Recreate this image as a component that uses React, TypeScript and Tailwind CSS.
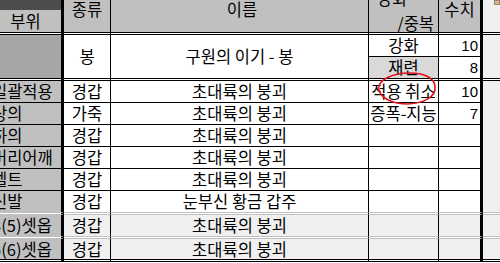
const C1 = 'w-[64px] shrink-0 border-r-[3px] border-r-black overflow-hidden';
const C2 = 'w-[47px] shrink-0 border-r border-r-black';
const C3 = 'w-[258px] shrink-0 border-r border-r-black';
const C4 = 'w-[70px] shrink-0 border-r border-r-black';
const C5 = 'w-[44px] shrink-0 border-r-[3px] border-r-black';
const C6 = 'w-[17px] shrink-0';

type Item = { part: string; kind: string; name: string; opt?: string; val?: string };

const rows: Item[] = [
  { part: '일괄적용', kind: '경갑', name: '초대륙의 붕괴', opt: '적용 취소', val: '10' },
  { part: '상의', kind: '가죽', name: '초대륙의 붕괴', opt: '증폭-지능', val: '7' },
  { part: '하의', kind: '경갑', name: '초대륙의 붕괴' },
  { part: '머리어깨', kind: '경갑', name: '초대륙의 붕괴' },
  { part: '벨트', kind: '경갑', name: '초대륙의 붕괴' },
  { part: '신발', kind: '경갑', name: '눈부신 황금 갑주' },
];

const setRows: Item[] = [
  { part: '3(5)셋옵', kind: '경갑', name: '초대륙의 붕괴' },
  { part: '5(6)셋옵', kind: '경갑', name: '초대륙의 붕괴' },
];

// excel style double rule (line / white / line)
function Sep({ gray }: { gray?: boolean }) {
  const y = gray ? 'border-y border-y-[#c0c0c0] bg-white' : 'border-y border-y-black bg-white';
  return (
    <div className="flex h-[3px]">
      <div className={`${C1} ${y}`} />
      <div className={`${C2} ${y}`} />
      <div className={`${C3} ${y}`} />
      <div className={`${C4} ${y}`} />
      <div className={`${C5} ${y}`} />
      <div className={`${C6} ${y}`} />
    </div>
  );
}

function Row({ item, h, line, shade }: { item: Item; h: string; line?: boolean; shade?: boolean }) {
  const b = line ? 'border-b border-b-black' : '';
  const bg = shade ? 'bg-[#f0f0f0]' : 'bg-white';
  return (
    <div className={`flex ${h}`}>
      <div className={`${C1} ${b} bg-[#c0c0c0] flex items-center`}>
        <span className="ml-[-8px] whitespace-nowrap">{item.part}</span>
      </div>
      <div className={`${C2} ${b} ${bg} flex items-center justify-center`}>{item.kind}</div>
      <div className={`${C3} ${b} ${bg} flex items-center justify-center whitespace-nowrap`}>{item.name}</div>
      <div className={`${C4} ${b} ${bg} flex items-center justify-center whitespace-nowrap`}>{item.opt}</div>
      <div className={`${C5} ${b} ${bg} flex items-center justify-end pr-[2px] text-[15px] font-['Liberation_Sans',sans-serif]`}>
        {item.val}
      </div>
      <div className={`${C6} bg-[#f0f0f0]`} />
    </div>
  );
}

export default function App() {
  return (
    <div className="relative w-[500px] h-[263px] overflow-hidden bg-white text-black text-[16.5px] leading-none font-['Noto_Sans_CJK_KR',sans-serif]">
      {/* header */}
      <div className="flex h-[32px] bg-[#c0c0c0]">
        <div className={`${C1} flex flex-col`}>
          <div className="h-[10px] bg-[#4d4d4d]" />
          <div className="flex-1 flex items-center justify-center -ml-[10px] w-[71px]">부위</div>
        </div>
        <div className={`${C2} flex justify-center pt-[1px]`}>종류</div>
        <div className={`${C3} flex justify-center pt-[1px] pl-[5px]`}>이름</div>
        <div className={`${C4} flex flex-col`}>
          <span className="mt-[-10px] pl-[8px]">강화</span>
          <span className="self-end pr-[4px] mt-[8px]">/중복</span>
        </div>
        <div className={`${C5} flex justify-center pt-[1px]`}>수치</div>
        <div className={`${C6} bg-[#f0f0f0] flex justify-end`}>
          <div className="w-[6px] h-[5px] border border-[#8a8a8a] bg-[#f0b060]" />
        </div>
      </div>
      <Sep />

      {/* weapon block */}
      <div className="flex h-[43px]">
        <div className={`${C1} bg-[#a6a6a6]`} />
        <div className={`${C2} bg-white flex items-center justify-center`}>봉</div>
        <div className={`${C3} bg-white flex items-center justify-center`}>구원의 이기 - 봉</div>
        <div className={`${C4} flex flex-col`}>
          <div className="h-[22px] border-b border-b-black bg-white flex items-center justify-center">강화</div>
          <div className="flex-1 bg-[#d9d9d9] flex items-center justify-center">재련</div>
        </div>
        <div className={`${C5} flex flex-col text-[15px] font-['Liberation_Sans',sans-serif]`}>
          <div className="h-[22px] border-b border-b-black bg-white flex items-center justify-end pr-[2px]">10</div>
          <div className="flex-1 bg-white flex items-center justify-end pr-[2px]">8</div>
        </div>
        <div className={`${C6} bg-[#f0f0f0]`} />
      </div>
      <Sep />

      {rows.map((r, i) => (
        <Row key={i} item={r} h={i < 5 ? 'h-[22px]' : 'h-[21px]'} line={i < 5} />
      ))}
      <Sep gray />
      <Row item={setRows[0]} h="h-[21px]" shade />
      <Sep gray />
      <Row item={setRows[1]} h="h-[20px]" shade />
      <Sep />

      {/* red hand-drawn circle */}
      <svg className="absolute inset-0 pointer-events-none" width="500" height="263" viewBox="0 0 500 263">
        <path
          d="M379 90 C377 80 392 73 410 73 C426 73 435 79 435 87 C436 97 424 103 408 104 C392 104 381 98 379 90"
          fill="none"
          stroke="#e3121b"
          strokeWidth="1.6"
        />
      </svg>
    </div>
  );
}
